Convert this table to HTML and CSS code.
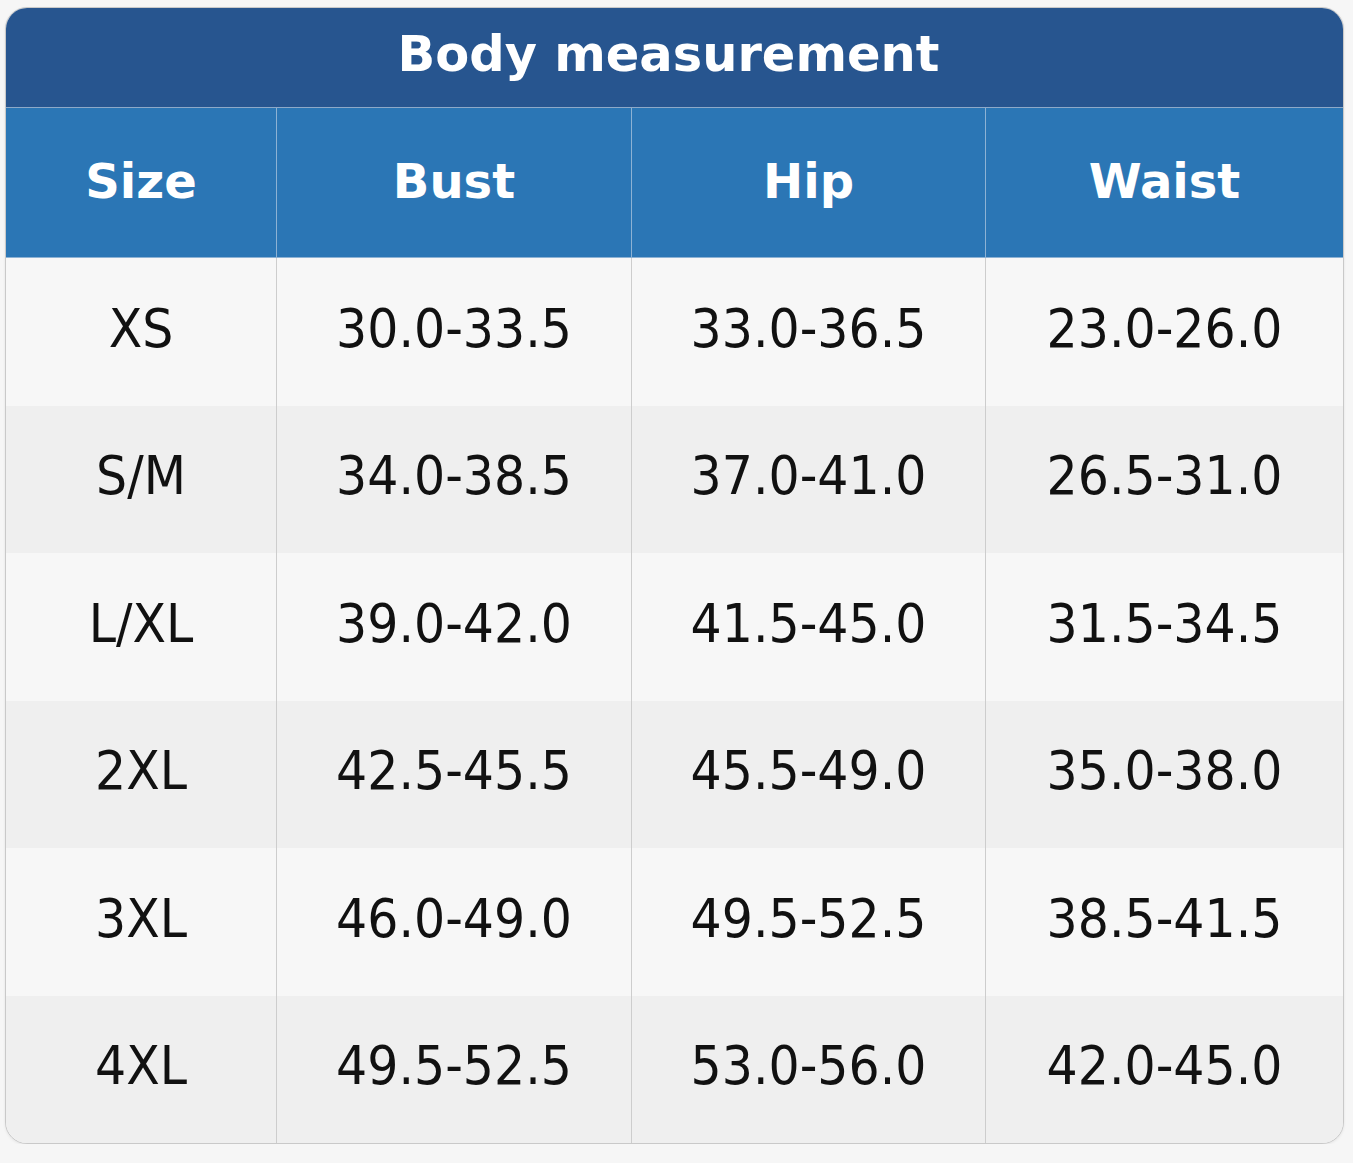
FILE: index.html
```html
<!DOCTYPE html>
<html lang="en">
<head>
<meta charset="utf-8">
<title>Body measurement</title>
<link rel="stylesheet" href="styles.css">
</head>
<body>
<div class="chart">
  <div class="title"><span>Body measurement</span></div>
  <div class="row head">
    <div class="cell"><span>Size</span></div>
    <div class="cell"><span>Bust</span></div>
    <div class="cell"><span>Hip</span></div>
    <div class="cell"><span>Waist</span></div>
  </div>
  <div class="row odd">
    <div class="cell"><span>XS</span></div>
    <div class="cell"><span>30.0-33.5</span></div>
    <div class="cell"><span>33.0-36.5</span></div>
    <div class="cell"><span>23.0-26.0</span></div>
  </div>
  <div class="row even">
    <div class="cell"><span>S/M</span></div>
    <div class="cell"><span>34.0-38.5</span></div>
    <div class="cell"><span>37.0-41.0</span></div>
    <div class="cell"><span>26.5-31.0</span></div>
  </div>
  <div class="row odd">
    <div class="cell"><span>L/XL</span></div>
    <div class="cell"><span>39.0-42.0</span></div>
    <div class="cell"><span>41.5-45.0</span></div>
    <div class="cell"><span>31.5-34.5</span></div>
  </div>
  <div class="row even">
    <div class="cell"><span>2XL</span></div>
    <div class="cell"><span>42.5-45.5</span></div>
    <div class="cell"><span>45.5-49.0</span></div>
    <div class="cell"><span>35.0-38.0</span></div>
  </div>
  <div class="row odd">
    <div class="cell"><span>3XL</span></div>
    <div class="cell"><span>46.0-49.0</span></div>
    <div class="cell"><span>49.5-52.5</span></div>
    <div class="cell"><span>38.5-41.5</span></div>
  </div>
  <div class="row even">
    <div class="cell"><span>4XL</span></div>
    <div class="cell"><span>49.5-52.5</span></div>
    <div class="cell"><span>53.0-56.0</span></div>
    <div class="cell"><span>42.0-45.0</span></div>
  </div>
</div>
</body>
</html>
```

FILE: styles.css
```css
html, body {
  margin: 0;
  padding: 0;
  background: #f6f6f6;
}

body {
  padding: 7px 0 0 5px;
  font-family: "DejaVu Sans", "Liberation Sans", sans-serif;
}

.chart {
  box-sizing: border-box;
  width: 1339px;
  border: 1px solid #c9c9c9;
  border-radius: 22px;
  overflow: hidden;
  background: #f7f7f7;
  box-shadow: 0 1px 3px rgba(0, 0, 0, 0.08);
}

.title {
  box-sizing: content-box;
  height: 91px;
  padding: 0 12px 8px 0;
  background: #27558f;
  border-bottom: 1px solid #8ea9c8;
  color: #ffffff;
  font-weight: bold;
  font-size: 49.5px;
  display: flex;
  align-items: center;
  justify-content: center;
}

.row {
  display: grid;
  grid-template-columns: 270px 355px 354px 1fr;
  height: 147px;
}

.row:nth-child(odd) {
  height: 148px;
}

.cell {
  box-sizing: border-box;
  display: flex;
  align-items: center;
  justify-content: center;
  border-left: 1px solid #cdcdcd;
  color: #111111;
  font-size: 49px;
  padding-bottom: 6px;
}

.cell:first-child {
  border-left: none;
}

.cell span {
  display: inline-block;
  transform: scaleY(1.09);
}

.odd {
  background: #f7f7f7;
}

.even {
  background: #efefef;
}

.row.head {
  height: 150px;
  background: #2b76b5;
  border-bottom: 1px solid #8db2d4;
  box-sizing: border-box;
}

.head .cell {
  border-left-color: #8db2d4;
  color: #ffffff;
  font-weight: bold;
  font-size: 48px;
  padding-bottom: 4px;
}

.head .cell span {
  transform: none;
}
```
